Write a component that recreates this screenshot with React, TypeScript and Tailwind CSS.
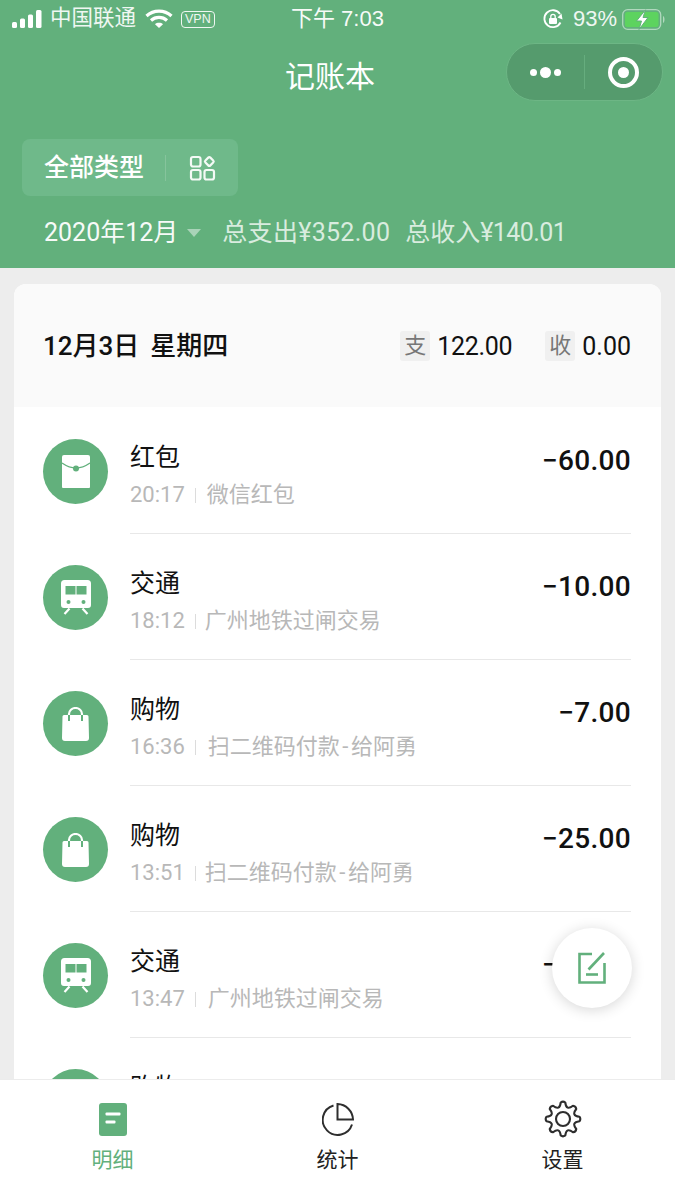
import React from "react";

const font = { fontFamily: '"Roboto", "Noto Sans CJK SC", sans-serif' };
const statusFont = { fontFamily: '"Liberation Sans", "Noto Sans CJK SC", sans-serif' };

function Signal() {
  return (
    <svg width="30" height="19" viewBox="0 0 30 19" fill="#fff">
      <rect x="0" y="12" width="5" height="6" rx="1.5" />
      <rect x="8" y="8.5" width="5" height="9.5" rx="1.5" />
      <rect x="16" y="4.5" width="5" height="13.5" rx="1.5" />
      <rect x="24" y="0" width="5.5" height="18" rx="1.5" />
    </svg>
  );
}
function Wifi() {
  return (
    <svg width="28" height="20" viewBox="0 0 28 20" fill="none" stroke="#fff" strokeWidth="3.2">
      <path d="M1.5 7 C8.5 0.4 19.5 0.4 26.5 7" />
      <path d="M6 11.5 C10.5 7.4 17.5 7.4 22 11.5" />
      <path d="M14 19 L10 15.2 C12 13.4 16 13.4 18 15.2 Z" fill="#fff" stroke="none" />
    </svg>
  );
}
function Rotation() {
  return (
    <svg width="22" height="22" viewBox="0 0 22 22" fill="none">
      <path d="M18.5 14.5 A8.5 8.5 0 1 1 18 6" stroke="#fff" strokeWidth="1.8" />
      <path d="M20.5 11.5 L15.5 9.5 L19.5 5.5 Z" fill="#fff" />
      <rect x="7" y="10" width="8" height="6" rx="1" fill="#fff" />
      <path d="M8.8 10 V8.6 a2.2 2.2 0 0 1 4.4 0 V10" stroke="#fff" strokeWidth="1.3" />
    </svg>
  );
}
function Battery() {
  return (
    <svg width="44" height="21" viewBox="0 0 44 21" fill="none">
      <rect x="0.7" y="0.7" width="38" height="19.6" rx="5" stroke="#ffffff" strokeOpacity="0.5" strokeWidth="1.3" />
      <rect x="3" y="3" width="33.5" height="15" rx="2.5" fill="#5dd35f" />
      <path d="M41 7 C43 7.5 43 13.5 41 14 Z" fill="#ffffff" fillOpacity="0.5" />
      <path d="M23.5 0.8 L14.5 12 H19.5 L17 20.5 L26 8.5 H21 Z" fill="#fff" stroke="#62b07c" strokeWidth="1" />
    </svg>
  );
}
function GridIcon() {
  return (
    <svg width="28" height="28" viewBox="0 0 28 28" fill="none" stroke="#fff" strokeWidth="2.2" strokeOpacity="0.92">
      <rect x="2" y="3" width="9.5" height="9.5" rx="2" />
      <rect x="2" y="16" width="9.5" height="9.5" rx="2" />
      <rect x="15.5" y="16" width="9.5" height="9.5" rx="2" />
      <rect x="16.8" y="4" width="7" height="7" rx="1.5" transform="rotate(45 20.3 7.5)" />
    </svg>
  );
}
function Envelope() {
  return (
    <svg width="28" height="33" viewBox="0 0 28 33">
      <path d="M2 0 H26 A2 2 0 0 1 28 2 V32 A1 1 0 0 1 27 33 H1 A1 1 0 0 1 0 32 V2 A2 2 0 0 1 2 0 Z" fill="#fff" />
      <path d="M0 8 C5 11.5 9 13 14 13 C19 13 23 11.5 28 8" fill="none" stroke="#62b07c" strokeWidth="1.2" />
      <circle cx="14" cy="13.5" r="3" fill="#62b07c" />
    </svg>
  );
}
function Train() {
  return (
    <svg width="30" height="35" viewBox="0 0 30 35">
      <path d="M3.5 0 H26.5 A3.5 3.5 0 0 1 30 3.5 V25 A3 3 0 0 1 27 28 H3 A3 3 0 0 1 0 25 V3.5 A3.5 3.5 0 0 1 3.5 0 Z" fill="#fff" />
      <rect x="4.5" y="6" width="10" height="8.5" fill="#62b07c" />
      <rect x="15.5" y="6" width="10" height="8.5" fill="#62b07c" />
      <circle cx="7.5" cy="22" r="2" fill="#62b07c" />
      <circle cx="22.5" cy="22" r="2" fill="#62b07c" />
      <path d="M8.5 28.5 L3.5 34 M21.5 28.5 L26.5 34" stroke="#fff" strokeWidth="2.2" />
    </svg>
  );
}
function Bag() {
  return (
    <svg width="27" height="34" viewBox="0 0 27 34">
      <path d="M2 8 H25 A1.5 1.5 0 0 1 26.5 9.5 L27 31 A3 3 0 0 1 24 34 H3 A3 3 0 0 1 0 31 L0.5 9.5 A1.5 1.5 0 0 1 2 8 Z" fill="#fff" />
      <path d="M7 10 V7 A6.5 6 0 0 1 20 7 V10" fill="none" stroke="#fff" strokeWidth="2.2" />
      <path d="M7 8 V14 M20 8 V14" stroke="#62b07c" strokeWidth="2" />
    </svg>
  );
}

function gearPath() {
  const c = 19;
  const pt = (deg: number, r: number) => {
    const a = ((deg - 90) * Math.PI) / 180;
    return `${(c + r * Math.cos(a)).toFixed(2)} ${(c + r * Math.sin(a)).toFixed(2)}`;
  };
  let d = `M${pt(-8, 16.6)}`;
  for (let i = 0; i < 8; i++) {
    const a = i * 45;
    d += ` Q${pt(a, 18.2)} ${pt(a + 8, 16.6)}`;
    d += ` Q${pt(a + 22.5, 8.6)} ${pt(a + 37, 16.6)}`;
  }
  return d + " Z";
}
function Gear() {
  return (
    <svg width="38" height="38" viewBox="0 0 38 38" fill="none" stroke="#2e2e2e" strokeWidth="2.1" strokeLinejoin="round">
      <path d={gearPath()} />
      <circle cx="19" cy="19" r="7" />
    </svg>
  );
}

const rows = [
  { t: "红包", time: "20:17", d: "微信红包", a: "−60.00", I: Envelope, m: "ml-[11px]" },
  { t: "交通", time: "18:12", d: "广州地铁过闸交易", a: "−10.00", I: Train, m: "ml-[9px]" },
  { t: "购物", time: "16:36", d: "扫二维码付款-给阿勇", a: "−7.00", I: Bag, m: "ml-[12px]" },
  { t: "购物", time: "13:51", d: "扫二维码付款-给阿勇", a: "−25.00", I: Bag, m: "ml-[9px]" },
  { t: "交通", time: "13:47", d: "广州地铁过闸交易", a: "−10.00", I: Train, m: "ml-[12px]" },
  { t: "购物", time: "12:30", d: "扫二维码付款-给阿勇", a: "−10.00", I: Bag, m: "ml-[9px]" },
];

function Desc({ text }: { text: string }) {
  const parts = text.split("-");
  if (parts.length < 2) return <>{text}</>;
  return (
    <>
      {parts[0]}
      <span className="px-[2.5px]">-</span>
      {parts[1]}
    </>
  );
}

export default function App() {
  return (
    <div style={font} className="relative flex h-[1200px] w-[675px] flex-col overflow-hidden bg-[#ededed]">
      <header className="h-[268px] shrink-0 bg-[#62b07c] text-white">
        <div style={statusFont} className="flex h-[38px] items-center pr-[9px] pl-[12px]">
          <div className="flex w-[216px] shrink-0 items-center">
            <Signal />
            <span className="ml-[8px] text-[21.5px] leading-none opacity-90">中国联通</span>
            <span className="ml-[9px]"><Wifi /></span>
            <span className="ml-[8px] rounded-[4px] border border-white px-[3px] text-[12.5px] leading-[15px] font-medium opacity-90">VPN</span>
          </div>
          <span className="ml-[63px] text-[22px] leading-none whitespace-nowrap opacity-95">下午 7:03</span>
          <div className="ml-auto flex items-center gap-[6px]">
            <span className="mr-[3px]"><Rotation /></span>
            <span className="text-[22px] leading-none opacity-90">93%</span>
            <span className="-ml-[1px]"><Battery /></span>
          </div>
        </div>
        <div className="relative flex h-[78px] items-center justify-center pr-[15px]">
          <span className="text-[30px] leading-none">记账本</span>
          <div className="absolute top-[5px] left-[506px] flex h-[58px] w-[157px] items-center rounded-full border border-[#6db685] bg-[#559b6d]">
            <div className="flex w-[77px] items-center justify-center gap-[3px]">
              <span className="h-[7px] w-[7px] rounded-full bg-white" />
              <span className="h-[11px] w-[11px] rounded-full bg-white" />
              <span className="h-[7px] w-[7px] rounded-full bg-white" />
            </div>
            <div className="h-[34px] w-px bg-[#66ad7e]" />
            <div className="flex flex-1 items-center justify-center">
              <div className="flex h-[31px] w-[31px] items-center justify-center rounded-full border-[4px] border-white">
                <span className="h-[11px] w-[11px] rounded-full bg-white" />
              </div>
            </div>
          </div>
        </div>
        <div className="mt-[23px] ml-[22px] flex h-[57px] w-[216px] items-center rounded-[8px] bg-[#6fb98a] pl-[22px]">
          <span className="text-[25px] leading-none font-medium">全部类型</span>
          <span className="mr-[23px] ml-[21px] h-[26px] w-px bg-[#86c49c]" />
          <GridIcon />
        </div>
        <div className="mt-[24px] flex items-center pl-[44px] text-[25px] leading-none whitespace-nowrap">
          <span className="opacity-95">2020年12月</span>
          <span className="mt-[1px] ml-[9px] h-0 w-0 border-x-[7.5px] border-t-[8px] border-x-transparent border-t-[#a9d3b8]" />
          <span className="ml-[21px] tracking-[0.3px] text-[#d9ecdf]">总支出¥352.00</span>
          <span className="ml-[15px] text-[#d9ecdf]">
            总收入<span className="tracking-[-0.6px]">¥140.01</span>
          </span>
        </div>
      </header>

      <main className="min-h-0 flex-1 overflow-hidden px-[14px] pt-[16px]">
        <div className="overflow-hidden rounded-t-[12px] bg-white">
          <div className="flex h-[123px] items-center bg-[#fafafa] pr-[30px] pl-[29px]">
            <span className="text-[26px] leading-none font-medium whitespace-nowrap text-[#111]">12月3日</span>
            <span className="ml-[11px] text-[26px] leading-none font-medium whitespace-nowrap text-[#111]">星期四</span>
            <span className="ml-auto flex h-[30px] w-[30px] items-center justify-center rounded-[3px] bg-[#f0f0f0] text-[22px] leading-none text-[#777]">支</span>
            <span className="mt-[2px] ml-[7px] text-[25px] leading-none tracking-[-0.3px] text-[#111]">122.00</span>
            <span className="ml-[33px] flex h-[30px] w-[30px] items-center justify-center rounded-[3px] bg-[#f0f0f0] text-[22px] leading-none text-[#777]">收</span>
            <span className="mt-[2px] ml-[7px] text-[25px] leading-none text-[#111]">0.00</span>
          </div>
          <div className="pt-[1px] pl-[29px]">
            {rows.map((r, i) => (
              <div key={i} className="flex h-[126px] items-start">
                <div className="mt-[31px] flex h-[65px] w-[65px] shrink-0 items-center justify-center rounded-full bg-[#62b07c]">
                  <r.I />
                </div>
                <div className="mr-[30px] ml-[22px] flex h-[126px] flex-1 flex-col border-b border-[#e8e8e8]">
                  <div className="flex items-start justify-between pt-[35px]">
                    <span className="text-[25px] leading-[30px] text-[#111]">{r.t}</span>
                    <span className="mt-[1px] text-[28px] leading-[34px] font-medium tracking-[0.3px] text-[#111]">{r.a}</span>
                  </div>
                  <div className="mt-[4px] flex items-center text-[22px] leading-[26px] text-[#b8b8b8]">
                    <span>{r.time}</span>
                    <span className="ml-[10px] h-[15px] w-px bg-[#dcdcdc]" />
                    <span className={r.m}><Desc text={r.d} /></span>
                  </div>
                </div>
              </div>
            ))}
          </div>
        </div>
      </main>

      <nav className="z-10 flex h-[121px] shrink-0 border-t border-[#ececec] bg-white">
        <div className="flex w-[225px] flex-col items-center pt-[23px]">
          <svg width="28" height="33" viewBox="0 0 28 33">
            <rect width="28" height="33" rx="3" fill="#62b07c" />
            <rect x="6.5" y="9.5" width="15" height="3" rx="1" fill="#fff" />
            <rect x="6.5" y="17.5" width="10" height="3" rx="1" fill="#fff" />
          </svg>
          <span className="mt-[10px] text-[21px] leading-[28px] text-[#62b07c]">明细</span>
        </div>
        <div className="flex w-[225px] flex-col items-center pt-[23px]">
          <svg width="32" height="33" viewBox="0 0 32 33" fill="none" stroke="#2e2e2e" strokeWidth="2">
            <path d="M11.5 2.5 A15 15 0 1 0 30 21.5" />
            <path d="M15.5 1 A16 16 0 0 1 31 16.5 H15.5 Z" />
          </svg>
          <span className="mt-[10px] text-[21px] leading-[28px] text-[#222]">统计</span>
        </div>
        <div className="flex w-[225px] flex-col items-center pt-[20px]">
          <Gear />
          <span className="mt-[8px] text-[21px] leading-[28px] text-[#222]">设置</span>
        </div>
      </nav>

      <div className="absolute top-[928px] left-[552px] z-20 flex h-[80px] w-[80px] items-center justify-center rounded-full bg-white shadow-[0_2px_14px_rgba(0,0,0,0.16)]">
        <svg width="28" height="32" viewBox="0 0 28 32" fill="none" stroke="#62b07c" strokeWidth="2.6">
          <path d="M14 2 H1.5 V30.5 H26.5 V11" />
          <path d="M10.5 17.5 L26 1" />
          <path d="M8 22.5 H20" />
        </svg>
      </div>
    </div>
  );
}
